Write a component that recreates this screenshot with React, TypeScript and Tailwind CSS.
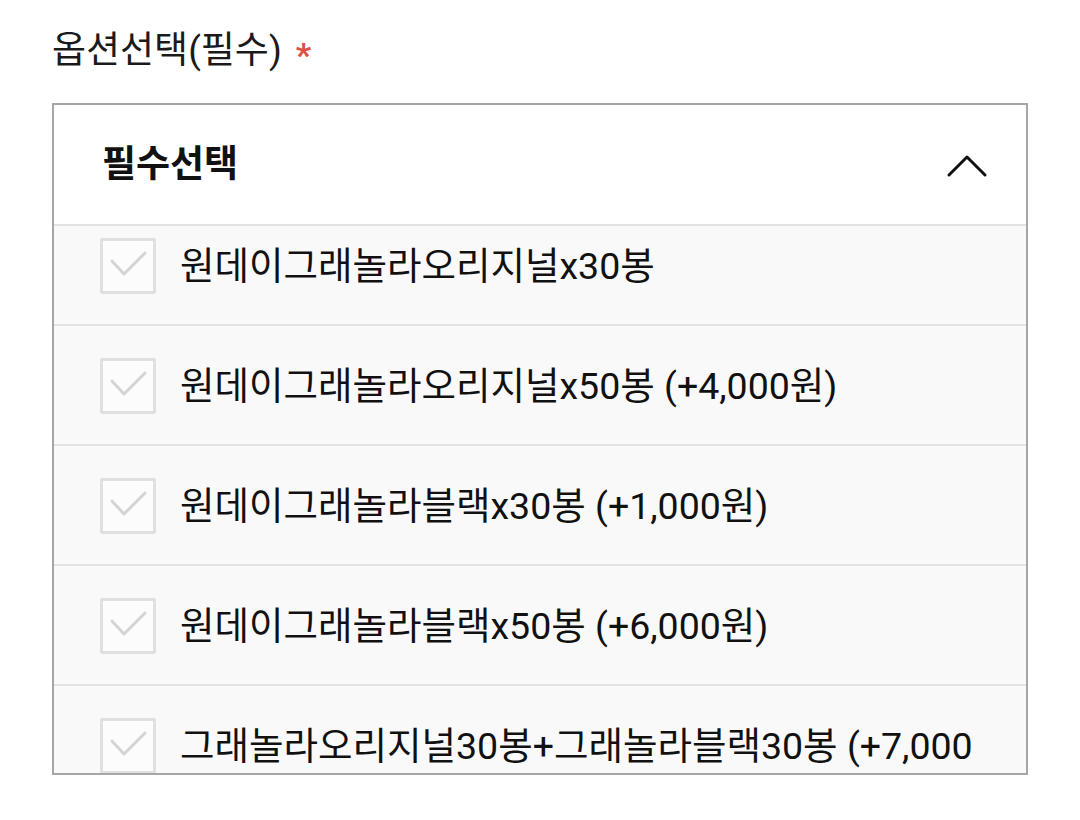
import React from 'react';

const options = [
  '원데이그래놀라오리지널x30봉',
  '원데이그래놀라오리지널x50봉 (+4,000원)',
  '원데이그래놀라블랙x30봉 (+1,000원)',
  '원데이그래놀라블랙x50봉 (+6,000원)',
  '그래놀라오리지널30봉+그래놀라블랙30봉 (+7,000원)',
];

const CheckBox = () => (
  <div className="w-[56px] h-[56px] shrink-0 border-[3px] border-[#e0e0e0] rounded-[2px] bg-[#fcfcfc]">
    <svg width="50" height="50" viewBox="0 0 50 50" fill="none">
      <polyline points="9,20 21,33 42,12" stroke="#d4d4d4" strokeWidth="3" strokeLinecap="round" strokeLinejoin="round" />
    </svg>
  </div>
);

const App = () => {
  return (
    <div
      className="w-[1080px] h-[820px] bg-white pl-[52px] pr-[52px] pt-[26px]"
      style={{ fontFamily: 'Roboto, "Noto Sans CJK KR", "Noto Sans", sans-serif' }}
    >
      {/* Label */}
      <div className="h-[77px] flex items-start text-[37px] leading-[50px] text-[#1a1a1a]">
        옵션선택(필수)
        <span className="ml-[14px] text-[#dc5046] text-[34px] font-bold leading-[58px]">*</span>
      </div>

      {/* Select box */}
      <div className="w-[976px] h-[672px] border-2 border-[#a6a6a6] flex flex-col overflow-hidden">
        <div className="h-[121px] shrink-0 bg-white border-b-2 border-[#e2e2e2] flex items-center justify-between pl-[48px] pr-[38px]">
          <span className="text-[37px] font-bold text-[#111]">필수선택</span>
          <svg width="42" height="26" viewBox="0 0 42 26" fill="none">
            <polyline points="3,23 21,5 39,23" stroke="#111" strokeWidth="3" strokeLinecap="round" strokeLinejoin="round" />
          </svg>
        </div>
        <div className="flex-1 bg-[#f9f9f9] overflow-hidden">
          <div className="-mt-[20px]">
            {options.map((o) => (
              <div
                key={o}
                className="border-b-2 border-[#e3e3e3] flex items-start pl-[46px] pr-[24px] pt-[32px] pb-[30px] gap-[24px]"
              >
                <CheckBox />
                <span className="text-[37.5px] leading-[56px] text-[#111]">{o}</span>
              </div>
            ))}
          </div>
        </div>
      </div>
    </div>
  );
};

export default App;
